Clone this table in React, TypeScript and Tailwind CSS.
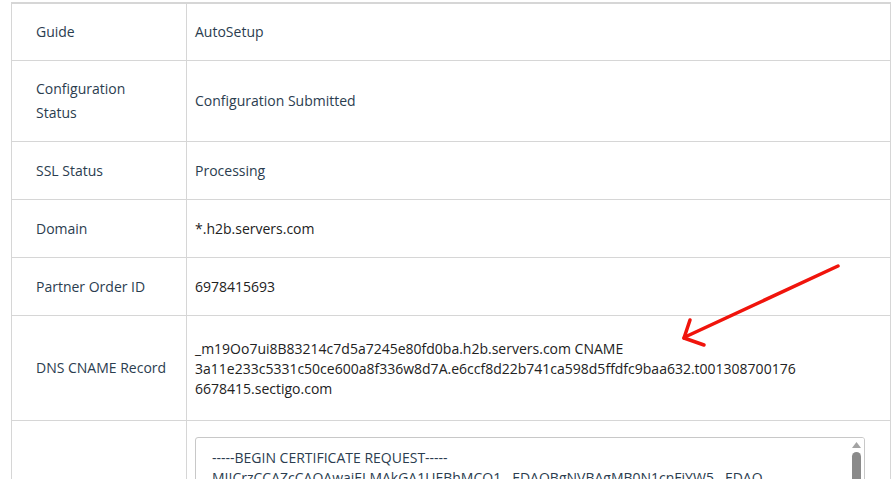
const rows: { label: React.ReactNode; value: React.ReactNode; h: string; dark?: boolean }[] = [
  { label: 'Guide', value: 'AutoSetup', h: 'h-[57px]' },
  { label: <>Configuration<br />Status</>, value: 'Configuration Submitted', h: 'h-[81px]' },
  { label: 'SSL Status', value: 'Processing', h: 'h-[58px]' },
  { label: 'Domain', value: '*.h2b.servers.com', h: 'h-[58px]', dark: true },
  { label: 'Partner Order ID', value: '6978415693', h: 'h-[58px]', dark: true },
]

export default function App() {
  return (
    <div className="relative min-h-screen bg-white pl-[11px] pt-[2px] font-['Open_Sans',sans-serif] text-[14px] overflow-hidden">
      <div className="w-[880px] border-t-2 border-x border-[#d6d6d6]">
        {rows.map((r, i) => (
          <div key={i} className={`flex border-b border-[#d6d6d6] ${r.h}`}>
            <div className="w-[175px] shrink-0 border-r border-[#d6d6d6] pl-6 leading-6 text-[#2b3d4f] flex items-center">
              <span>{r.label}</span>
            </div>
            <div className={`flex-1 pl-2 leading-6 flex items-center ${r.dark ? 'text-[#222]' : 'text-[#2b3d4f]'}`}>
              {r.value}
            </div>
          </div>
        ))}

        {/* DNS record */}
        <div className="flex border-b border-[#d6d6d6] h-[105px]">
          <div className="w-[175px] shrink-0 border-r border-[#d6d6d6] pl-6 leading-6 text-[#2b3d4f] flex items-center">
            DNS CNAME Record
          </div>
          <div className="flex-1 pl-2 pt-[23px] leading-5 text-[#222]">
            _m19Oo7ui8B83214c7d5a7245e80fd0ba.h2b.servers.com CNAME
            <br />
            3a11e233c5331c50ce600a8f336w8d7A.e6ccf8d22b741ca598d5ffdfc9baa632.t001308700176
            <br />
            6678415.sectigo.com
          </div>
        </div>

        {/* CSR */}
        <div className="flex">
          <div className="w-[175px] shrink-0 border-r border-[#d6d6d6] h-[80px]" />
          <div className="flex-1 pl-2 pt-4">
            <div className="relative w-[670px] h-[80px] border border-[#c8c8c8] rounded-[3px] pl-4 pt-[10px] pr-6 leading-5 text-[#2b3d4f] overflow-hidden">
              <div>-----BEGIN CERTIFICATE REQUEST-----</div>
              <div className="whitespace-nowrap">MIICrzCCAZcCAQAwajELMAkGA1UEBhMCQ1...EDAOBgNVBAgMB0N1cnFiYW5...EDAQ</div>
              <div className="absolute right-0 top-0 bottom-0 w-[15px] bg-white flex flex-col items-center pt-[4px]">
                <svg width="9" height="6" viewBox="0 0 9 6">
                  <path d="M0 6 L4.5 0 L9 6 Z" fill="#a3a3a3" />
                </svg>
                <div className="mt-[4px] w-[9px] h-[40px] rounded-full bg-[#8a8a8a]" />
              </div>
            </div>
          </div>
        </div>
      </div>

      {/* annotation arrow */}
      <svg className="absolute left-0 top-0 pointer-events-none" width="893" height="479">
        <g stroke="#f0140c" strokeWidth="3.5" strokeLinecap="round" fill="none">
          <line x1="838" y1="266" x2="685" y2="337" />
          <line x1="684" y1="338" x2="690" y2="320" />
          <line x1="684" y1="338" x2="704" y2="345" />
        </g>
      </svg>
    </div>
  )
}
